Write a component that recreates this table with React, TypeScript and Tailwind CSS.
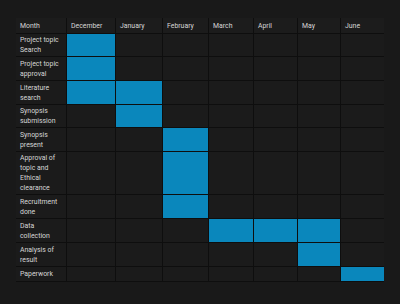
const months = ["December", "January", "February", "March", "April", "May", "June"];

// each task: label, row height, which month columns are filled
const tasks = [
  { label: "Project topic Search", h: "h-[22px]", on: [0] },
  { label: "Project topic approval", h: "h-[23px]", on: [0] },
  { label: "Literature search", h: "h-[23px]", on: [0, 1] },
  { label: "Synopsis submission", h: "h-[22px]", on: [1] },
  { label: "Synopsis present", h: "h-[23px]", on: [2] },
  { label: "Approval of topic and Ethical clearance", h: "h-[42px]", on: [2] },
  { label: "Recruitment done", h: "h-[23px]", on: [2] },
  { label: "Data collection", h: "h-[23px]", on: [3, 4, 5] },
  { label: "Analysis of result", h: "h-[23px]", on: [5] },
  { label: "Paperwork", h: "h-[14px]", on: [6] },
];

export default function App() {
  return (
    <div
      className="w-[400px] h-[304px] bg-[#191919] pt-[18px] pl-[16px]"
      style={{ fontFamily: "Roboto, 'Liberation Sans', sans-serif" }}
    >
      <div className="w-[368px] bg-[#0e0e0e] border-b border-[#0e0e0e] grid grid-cols-[50px_48px_46px_45px_44px_43px_42px_43px] gap-px text-[6.9px] leading-[10px] text-[#d6d6d6]">
        <div className="h-[15px] bg-[#1c1c1c] px-1 flex items-center">Month</div>
        {months.map((m) => (
          <div key={m} className="h-[15px] bg-[#1c1c1c] px-1 flex items-center">
            {m}
          </div>
        ))}
        {tasks.map((t) => (
          <div key={t.label} className="contents">
            <div className={`${t.h} bg-[#1b1b1b] px-1 flex items-center`}>
              <span className="w-[42px]">{t.label}</span>
            </div>
            {months.map((m, i) => (
              <div
                key={m}
                className={`${t.h} ${t.on.includes(i) ? "bg-[#0a87bc]" : "bg-[#1b1b1b]"}`}
              />
            ))}
          </div>
        ))}
      </div>
    </div>
  );
}
